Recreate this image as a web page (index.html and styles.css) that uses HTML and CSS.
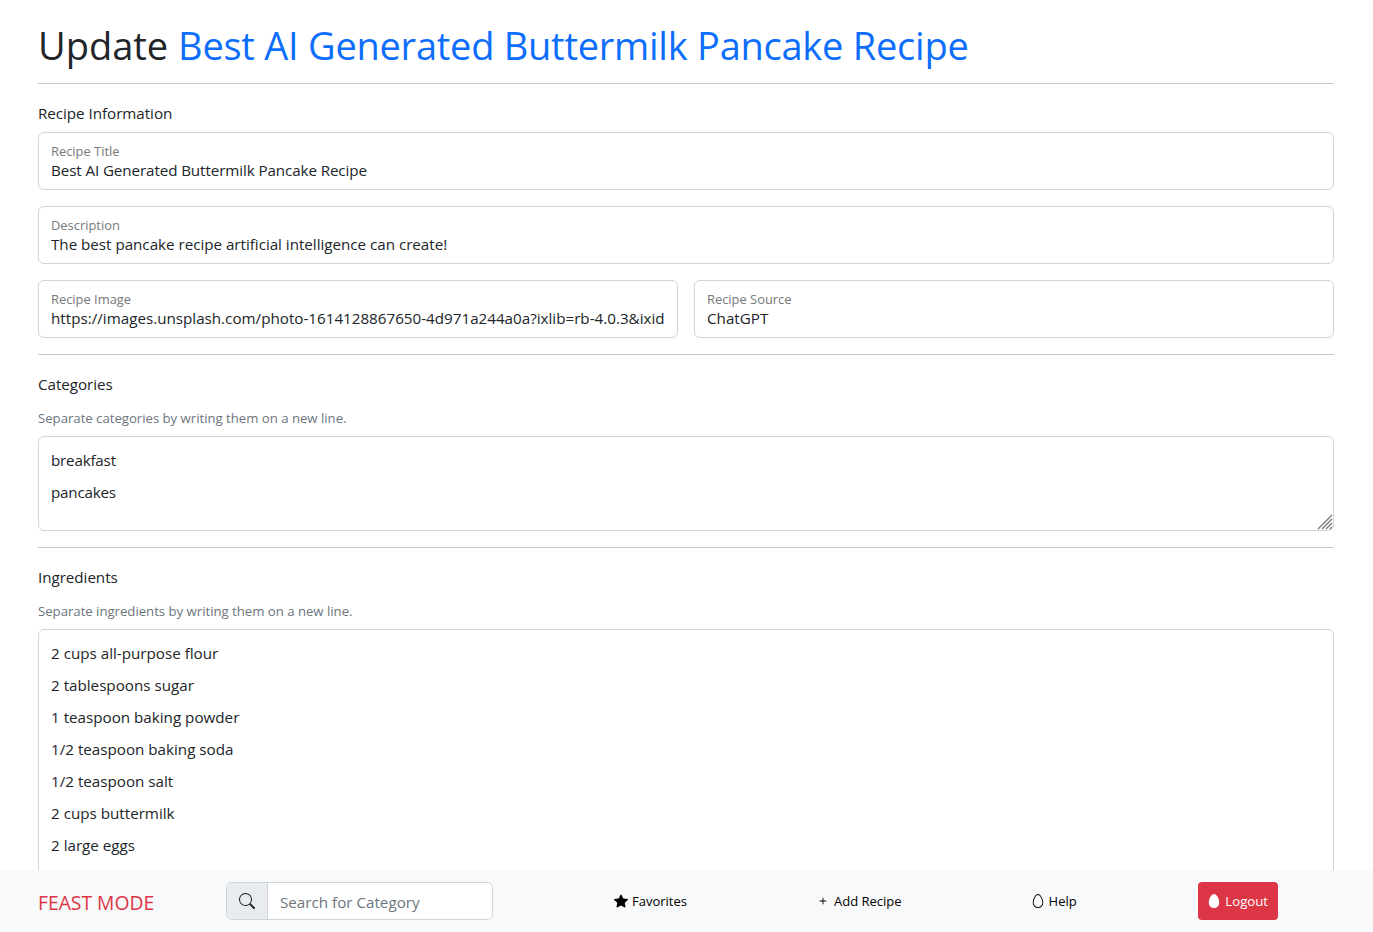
FILE: index.html
```html
<!DOCTYPE html>
<html lang="en">
<head>
<meta charset="utf-8">
<title>Update Recipe</title>
<link rel="stylesheet" href="styles.css">
</head>
<body>
<main class="page">
  <h1 class="title">Update <span class="title-name">Best AI Generated Buttermilk Pancake Recipe</span></h1>
  <hr class="rule">
  <form class="form">
    <h2 class="legend">Recipe Information</h2>
    <label class="field"><span class="field-label">Recipe Title</span><input class="field-input name" type="text" value="Best AI Generated Buttermilk Pancake Recipe"></label>
    <label class="field"><span class="field-label">Description</span><input class="field-input desc" type="text" value="The best pancake recipe artificial intelligence can create!"></label>
    <div class="row">
      <label class="field"><span class="field-label">Recipe Image</span><input class="field-input" type="text" value="https://images.unsplash.com/photo-1614128867650-4d971a244a0a?ixlib=rb-4.0.3&amp;ixid"></label>
      <label class="field"><span class="field-label">Recipe Source</span><input class="field-input" type="text" value="ChatGPT"></label>
    </div>
    <hr class="rule">
    <h2 class="legend">Categories</h2>
    <p class="hint">Separate categories by writing them on a new line.</p>
    <div class="area area-small">
      <p class="line">breakfast</p>
      <p class="line">pancakes</p>
      <svg class="grip" width="16" height="16" viewBox="0 0 16 16" fill="none" stroke="#777" stroke-width="1.3"><path d="M1 15L15 1M5 15L15 5M9 15L15 9M13 15L15 13"/></svg>
    </div>
    <hr class="rule">
    <h2 class="legend">Ingredients</h2>
    <p class="hint">Separate ingredients by writing them on a new line.</p>
    <div class="area area-large">
      <p class="line">2 cups all-purpose flour</p>
      <p class="line">2 tablespoons sugar</p>
      <p class="line">1 teaspoon baking powder</p>
      <p class="line">1/2 teaspoon baking soda</p>
      <p class="line">1/2 teaspoon salt</p>
      <p class="line">2 cups buttermilk</p>
      <p class="line">2 large eggs</p>
    </div>
  </form>
</main>
<nav class="bar">
  <a class="brand">FEAST MODE</a>
  <div class="search">
    <span class="search-icon"><svg width="16" height="16" viewBox="0 0 16 16" fill="#212529"><path d="M11.742 10.344a6.5 6.5 0 1 0-1.397 1.398h-.001c.03.04.062.078.098.115l3.85 3.85a1 1 0 0 0 1.415-1.414l-3.85-3.85a1.007 1.007 0 0 0-.115-.1zM12 6.5a5.5 5.5 0 1 1-11 0 5.5 5.5 0 0 1 11 0z"/></svg></span>
    <input class="search-input" type="text" placeholder="Search for Category">
  </div>
  <div class="links">
    <a class="link"><svg width="14" height="14" viewBox="0 0 16 16" fill="currentColor"><path d="M3.612 15.443c-.386.198-.824-.149-.746-.592l.83-4.73L.173 6.765c-.329-.314-.158-.888.283-.95l4.898-.696L7.538.792c.197-.39.73-.39.927 0l2.184 4.327 4.898.696c.441.062.612.636.282.95l-3.522 3.356.83 4.73c.078.443-.36.79-.746.592L8 13.187l-4.389 2.256z"/></svg><span class="link-text">Favorites</span></a>
    <a class="link"><svg width="14" height="14" viewBox="0 0 16 16" fill="currentColor"><path d="M8 4a.5.5 0 0 1 .5.5v3h3a.5.5 0 0 1 0 1h-3v3a.5.5 0 0 1-1 0v-3h-3a.5.5 0 0 1 0-1h3v-3A.5.5 0 0 1 8 4z"/></svg><span class="link-text">Add Recipe</span></a>
    <a class="link"><svg width="14" height="14" viewBox="0 0 16 16" fill="currentColor"><path d="M8 15a5 5 0 0 1-5-5c0-1.956.69-4.286 1.742-6.12.524-.913 1.112-1.658 1.704-2.164C7.044 1.206 7.572 1 8 1c.428 0 .956.206 1.554.716.592.506 1.18 1.251 1.704 2.164C12.31 5.714 13 8.044 13 10a5 5 0 0 1-5 5zm0 1a6 6 0 0 0 6-6c0-4.314-3-10-6-10S2 5.686 2 10a6 6 0 0 0 6 6z"/></svg><span class="link-text">Help</span></a>
    <a class="link logout"><svg width="14" height="14" viewBox="0 0 16 16" fill="currentColor"><path d="M14 10a6 6 0 0 1-12 0C2 5.686 5 0 8 0s6 5.686 6 10z"/></svg><span class="link-text">Logout</span></a>
  </div>
</nav>
</body>
</html>
```
FILE: styles.css
```css
* { box-sizing: border-box; }
body {
  margin: 0;
  height: 932px;
  overflow: hidden;
  display: flex;
  flex-direction: column;
  background: #fff;
  color: #212529;
  font-family: "Open Sans", "Noto Sans", sans-serif;
  font-size: 15.2px;
  line-height: 24px;
}
.page { flex: 1; min-height: 0; overflow: hidden; padding: 21px 39px 0 38px; }
.title { margin: 0; font-size: 38px; font-weight: 400; line-height: 48px; white-space: nowrap; }
.title-name { color: #0d6efd; letter-spacing: -0.25px; }
.rule { height: 1px; margin: 16px 0; border: 0; background: #c7c8ca; }
.title + .rule { margin-top: 14px; margin-bottom: 17px; }
.legend { margin: 0 0 7px; font-size: 15.2px; font-weight: 400; line-height: 24px; letter-spacing: -0.04px; }
.rule + .legend { margin-top: 17px; margin-bottom: 12px; }
.field {
  display: flex;
  flex-direction: column;
  flex: 1;
  height: 58px;
  margin-bottom: 16px;
  padding: 9px 12px 0;
  border: 1px solid #ced4da;
  border-radius: 6px;
}
.field-label { color: #75787b; font-size: 12.9px; line-height: 19px; }
.field-input {
  width: 100%;
  height: 20px;
  margin-top: -1px;
  padding: 0;
  border: 0;
  outline: 0;
  background: transparent;
  color: #212529;
  font: inherit;
  line-height: 20px;
}
.name { letter-spacing: -0.1px; }
.desc { letter-spacing: -0.02px; }
.row { display: flex; gap: 16px; }
.row .field { min-width: 0; }
.row + .rule { margin-top: 0; }
.hint { margin: 0 0 8px; color: #6c757d; font-size: 13.2px; line-height: 20px; letter-spacing: -0.02px; }
.area { position: relative; padding: 7px 12px; border: 1px solid #ced4da; border-radius: 6px; }
.area-small { height: 95px; }
.area-large { height: 400px; }
.line { margin: 0; line-height: 32px; }
.area-small .line { letter-spacing: -0.2px; }
.grip { position: absolute; right: 0; bottom: 0; }
.bar { display: flex; align-items: center; height: 62px; padding-left: 38px; background: #f8f9fa; }
.brand { width: 188px; padding-top: 4px; color: #dc3545; font-size: 19.3px; }
.search { display: flex; width: 267px; height: 38px; border: 1px solid #ced4da; border-radius: 6px; background: #fff; overflow: hidden; }
.search-icon { display: flex; align-items: center; justify-content: center; width: 41px; background: #e9ecef; border-right: 1px solid #ced4da; }
.search-input { flex: 1; min-width: 0; padding: 1px 12px 0; border: 0; outline: 0; font: inherit; }
.search-input::placeholder { color: #6c757d; opacity: 1; }
.links { display: flex; flex: 1; align-items: center; gap: 129px; padding-left: 121px; }
.link { display: flex; align-items: center; gap: 4px; color: #000; font-size: 13px; white-space: nowrap; }
.logout { width: 80px; height: 38px; margin-left: -8px; justify-content: center; border-radius: 4px; background: #dc3545; color: #fff; font-size: 13.2px; }
```
